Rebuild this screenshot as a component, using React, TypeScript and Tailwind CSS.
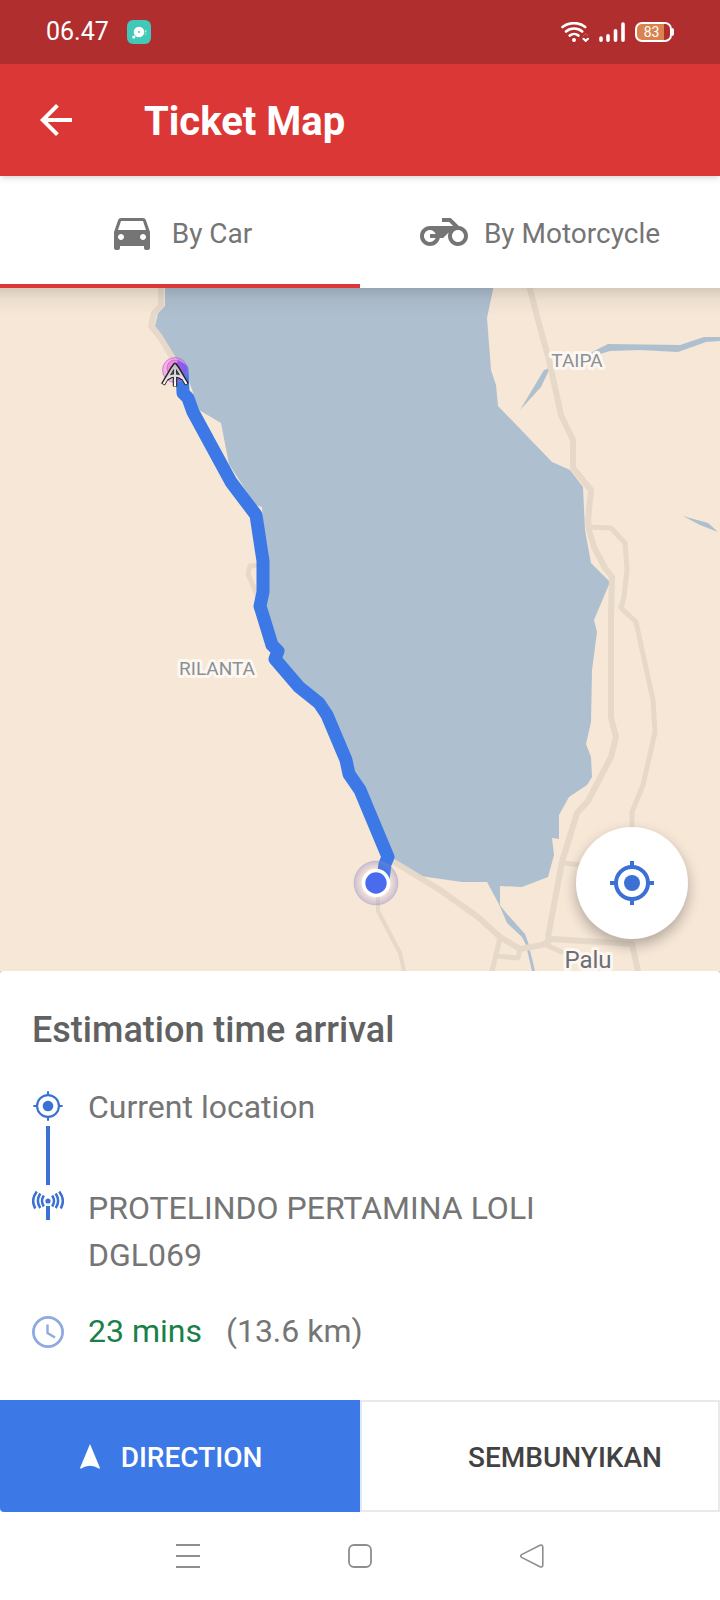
import React, { useState } from "react";

function TargetIcon({ className, line = 2 }: { className: string; line?: number }) {
  return (
    <svg viewBox="0 0 24 24" className={className} fill="none" stroke="currentColor" strokeWidth={line} aria-hidden="true">
      <circle cx="12" cy="12" r={9 - line / 2} />
      <circle cx="12" cy="12" r="4" fill="currentColor" stroke="none" />
      <path d="M12 1v3M12 20v3M1 12h3M20 12h3" />
    </svg>
  );
}

function StatusBar() {
  return (
    <div className="flex h-16 items-center justify-between bg-[#b12e2f] px-[46px] text-white">
      <div className="flex items-center gap-[18px]">
        <span className="text-[25px]">06.47</span>
        <svg viewBox="0 0 24 24" className="size-6" aria-hidden="true">
          <rect width="24" height="24" rx="6" fill="#41c8b8" />
          <circle cx="12" cy="12" r="5.3" fill="#fff" />
          <circle cx="6.8" cy="17" r="1.6" fill="#fff" />
          <circle cx="12" cy="12" r="1" fill="#41c8b8" />
          <path d="M18.7 10v2.2M18.7 13.6v1.2" stroke="#a9e6df" strokeWidth="1.4" />
        </svg>
      </div>
      <div className="flex items-center gap-[10px]">
        <svg viewBox="0 0 28 20" className="h-5 w-7" fill="none" stroke="#fff" strokeWidth="2.600" strokeLinecap="round" aria-hidden="true">
          <path d="M1.500 5C8-.2 18-.2 24.200 5M5 9.500c4.500-4 11.700-4 16.200 0M8.800 13.600c2.500-2.200 6.100-2.200 8.600 0" />
          <circle cx="13" cy="18" r="2" fill="#fff" stroke="none" />
          <path d="M22.500 16.800l2.200 2 2.200-2" strokeWidth="2.200" />
          <path d="M22.500 13.500l2.200-2 2.200 2" stroke="#c86464" strokeWidth="1" />
        </svg>
        <svg viewBox="0 0 26 20" className="h-5 w-[26px]" stroke="#fff" strokeWidth="3.600" strokeLinecap="round" aria-hidden="true">
          <path d="M2 16v2.200M9 13.800v4.400M16.500 8.800v9.400M24 2v16.200" />
        </svg>
        <div className="flex items-center">
          <div className="flex h-5 w-[37px] items-center justify-center rounded-[7px] border-2 border-white bg-linear-to-r from-[#d98350] from-82% to-[#b12e2f] to-82%">
            <span className="pr-1 text-sm leading-4">83</span>
          </div>
          <div className="h-2 w-[2px] rounded-r bg-white" />
        </div>
      </div>
    </div>
  );
}

function AreaMap() {
  return (
    <svg viewBox="0 288 720 683" className="block h-auto w-full bg-[#f6e7d7] font-[Roboto]" role="img" aria-label="Route map">
      <defs>
        <linearGradient id="topShade" x1="0" y1="0" x2="0" y2="1">
          <stop offset="0" stopColor="#000" stopOpacity="0.13" />
          <stop offset="0.4" stopColor="#000" stopOpacity="0.04" />
          <stop offset="1" stopColor="#000" stopOpacity="0" />
        </linearGradient>
        <radialGradient id="halo">
          <stop offset="0.6" stopColor="#8c7fc8" stopOpacity="0" />
          <stop offset="1" stopColor="#8c7fc8" stopOpacity="0.4" />
        </radialGradient>
        <linearGradient id="steel" gradientUnits="userSpaceOnUse" x1="0" y1="365" x2="0" y2="386">
          <stop offset="0" stopColor="#bdb8be" />
          <stop offset="1" stopColor="#fff" />
        </linearGradient>
      </defs>

      <g fill="#aebfcf">
        <path d="M165 285V306L158 313 155 326 160 333 174 355 186 372 199 410 221 423 229 464 255 505 262 507 263 520 268 560V593L264 606 274 640 284 652 280 660 300 682 322 699 330 712 342 741 354 780 362 792 394 861 420 876 462 882 487 882 500 906V886L522 887 548 877 554 855 552 838 559 839V815L569 797 587 785 592 777 591 757 586 744 591 722 592 670 597 632 594 620 610 582 591 563 585 530 583 487 570 470 552 462 498 406 496 385 491 370 487 318 494 285Z" />
        <path d="M499 904L507 914 525 934 528 942 535 971H532L526 945 522 937 507 923Z" />
        <path d="M520 410L544 370 550 368 541 387Z" />
        <path d="M556 366L590 353 608 344 680 345 704 337H720V341L706 342 678 352 640 350 610 351 590 357Z" />
        <path d="M683 516L708 523 718 532 700 525Z" />
      </g>

      <g fill="none" stroke="#e7d9c9" strokeWidth="6" strokeLinejoin="round" strokeLinecap="round">
        <path d="M161 285V306L154 313 151 326 160 337 172 357" />
        <path d="M258 565L250 566 248 574 258 597" strokeWidth="5" />
        <path d="M529 285L538 320 549 360 561 415 573 440V468L591 490 588 520 589 530 594 547 605 568 612 577 611 615V718L616 737 611 757 588 801 577 813 562 862 548 937" />
        <path d="M588 527L611 528 625 543 627 570 624 597 621 608 636 622 653 700 655 732 643 785 632 812V828" strokeWidth="5" />
        <path d="M563 863L582 865" strokeWidth="5" />
        <path d="M394 862L440 890 478 917 500 937 520 949 542 945 552 939 632 944 638 971" />
        <path d="M500 938L492 971M496 956L518 958 520 949M546 945L562 952" strokeWidth="5" />
        <path d="M378 892V911L400 953 404 971" strokeWidth="4" />
      </g>

      <path
        d="M175 366L182 370 183 393 188 398 193 412 231 482 256 515 263 561V592L260 606 272 645 278 651 275 659 299 687 319 703 327 715 346 760 349 774 360 790 388 857 385 864 383 880"
        fill="none"
        stroke="#3c79e6"
        strokeWidth="13"
        strokeLinejoin="round"
      />

      <g>
        <circle cx="175" cy="370" r="12.500" fill="#e33ff0" fillOpacity="0.3" stroke="#c35fe0" strokeOpacity="0.7" />
        <circle cx="175" cy="368" r="8" fill="#e33ff0" fillOpacity="0.35" stroke="#d33fe4" strokeOpacity="0.6" />
        <path d="M163 384.500L172.500 368 175 364.800 177.500 368 187 384.500M167 378.500Q175 372 183 378.500M175 366V386.500" fill="none" stroke="#222" strokeWidth="4.400" strokeLinejoin="round" />
        <path d="M163.500 384L172.700 368.500 175 365.500 177.300 368.500 186.500 384M167 378.500Q175 372 183 378.500M175 366V386" fill="none" stroke="url(#steel)" strokeWidth="2.200" />
      </g>

      <g>
        <circle cx="376" cy="883" r="22" fill="url(#halo)" stroke="#9a90c4" strokeOpacity="0.3" />
        <circle cx="376" cy="883" r="12.500" fill="#4b6bee" stroke="#fff" strokeWidth="3.600" />
      </g>

      <g fill="#8a9097" stroke="#fdf7f0" strokeWidth="6" strokeLinejoin="round" paintOrder="stroke" textAnchor="middle" fontSize="19">
        <text x="577" y="367">TAIPA</text>
        <text x="217" y="675">RILANTA</text>
        <text x="588" y="968" fill="#6c6e76" fontSize="24">Palu</text>
      </g>

      <rect y="288" width="720" height="28" fill="url(#topShade)" />
    </svg>
  );
}

export default function App() {
  const [mode, setMode] = useState("car");

  return (
    <div className="flex min-h-screen flex-col bg-white font-[Roboto,sans-serif] text-[#757575]">
      <StatusBar />

      <header className="z-10 flex h-28 items-center gap-16 bg-[#dc3737] px-8 text-white shadow-md">
        <button type="button" aria-label="Back">
          <svg viewBox="0 0 24 24" className="size-12" fill="currentColor" aria-hidden="true">
            <path d="M20 11H7.830l5.590-5.590L12 4l-8 8 8 8 1.410-1.410L7.830 13H20v-2z" />
          </svg>
        </button>
        <h1 className="pt-1 text-[40px] font-bold">Ticket Map</h1>
      </header>

      <nav className="grid h-28 grid-cols-2 text-[28px]" aria-label="Travel mode">
        <button
          type="button"
          aria-pressed={mode === "car"}
          onClick={() => setMode("car")}
          className={`flex items-center justify-center gap-4 border-y-4 border-t-transparent ${mode === "car" ? "border-b-[#dc3737]" : "border-b-transparent"}`}
        >
          <svg viewBox="0 0 24 24" className="size-12" fill="currentColor" aria-hidden="true">
            <path d="M18.920 6.010C18.720 5.420 18.160 5 17.500 5h-11c-.66 0-1.210.42-1.420 1.010L3 12v8c0 .55.45 1 1 1h1c.55 0 1-.45 1-1v-1h12v1c0 .55.45 1 1 1h1c.55 0 1-.45 1-1v-8l-2.080-5.990zM6.500 16c-.83 0-1.500-.67-1.500-1.500S5.670 13 6.500 13s1.500.67 1.500 1.500S7.330 16 6.500 16zm11 0c-.83 0-1.500-.67-1.500-1.500s.67-1.500 1.500-1.500 1.500.67 1.500 1.500-.67 1.500-1.500 1.500zM5 11l1.500-4.500h11L19 11H5z" />
          </svg>
          <span className="pt-1">By Car</span>
        </button>
        <button
          type="button"
          aria-pressed={mode === "motorcycle"}
          onClick={() => setMode("motorcycle")}
          className={`flex items-center justify-center gap-4 border-y-4 border-t-transparent ${mode === "motorcycle" ? "border-b-[#dc3737]" : "border-b-transparent"}`}
        >
          <svg viewBox="0 0 24 24" className="size-12" fill="currentColor" aria-hidden="true">
            <path d="M19.440 9.030L15.410 5H11v2h3.590l2 2H5c-2.800 0-5 2.200-5 5s2.200 5 5 5c2.460 0 4.450-1.690 4.900-4h1.650l2.770-2.770c-.21.54-.32 1.140-.32 1.770 0 2.800 2.200 5 5 5s5-2.200 5-5c0-2.650-1.970-4.770-4.560-4.970zM7.820 15C7.400 16.150 6.280 17 5 17c-1.630 0-3-1.370-3-3s1.370-3 3-3c1.280 0 2.400.85 2.820 2H5v2h2.820zM19 17c-1.660 0-3-1.340-3-3s1.340-3 3-3 3 1.340 3 3-1.340 3-3 3z" />
          </svg>
          <span className="pt-1">By Motorcycle</span>
        </button>
      </nav>

      <div className="relative">
        <AreaMap />
        <button
          type="button"
          aria-label="Center on my location"
          className="absolute right-8 bottom-8 flex size-28 items-center justify-center rounded-full bg-white text-[#3c71d4] shadow-[0_6px_14px_rgba(0,0,0,0.28)]"
        >
          <TargetIcon className="size-12" />
        </button>
      </div>

      <main className="bg-[#e9dccf]">
        <section className="rounded-t bg-white px-8 pt-[37px] pb-[45px] text-[32px] leading-[47px] shadow-[0_-1px_4px_rgba(0,0,0,0.12)]">
          <h2 className="mb-8 text-4xl leading-[44px] font-medium text-[#616161]">Estimation time arrival</h2>
          <ol>
            <li className="flex min-h-[101px] gap-6">
              <div className="flex w-8 flex-col items-center gap-1 pt-1.5 text-[#3c71d4]">
                <TargetIcon className="size-8" line={1.6} />
                <div className="w-1 flex-1 bg-current" />
              </div>
              <p>Current location</p>
            </li>
            <li className="flex gap-6">
              <div className="w-8 shrink-0 pt-1 text-[#3c71d4]">
                <svg viewBox="0 0 32 32" className="size-8" fill="none" stroke="currentColor" strokeWidth="2.500" aria-hidden="true">
                  <circle cx="16" cy="12" r="2.600" fill="currentColor" stroke="none" />
                  <path d="M16 17v14" strokeWidth="4" />
                  <path d="M11.800 6.500q-3.600 5.500 0 11M8.300 4.500q-4.800 7.500 0 14.500M4.800 2.500q-6.500 8.500 -1.500 17M20.200 6.500q3.600 5.500 0 11M23.700 4.500q4.800 7.500 0 14.500M27.200 2.500q6.500 8.500 1.500 17" />
                </svg>
              </div>
              <p>
                PROTELINDO PERTAMINA LOLI
                <br />
                DGL069
              </p>
            </li>
          </ol>
          <div className="mt-[29px] flex items-center gap-6">
            <svg viewBox="0 0 32 32" className="size-8" fill="none" stroke="#8daae2" strokeWidth="2.800" aria-hidden="true">
              <circle cx="16" cy="16" r="14.600" />
              <path d="M15.500 8.500V17l7.500 4.500" strokeWidth="2.400" />
            </svg>
            <span className="text-[#188048]">23 mins</span>
            <span>(13.6 km)</span>
          </div>
        </section>
      </main>

      <div className="grid h-28 grid-cols-2 text-[28px] font-medium">
        <button type="button" className="flex items-center justify-center gap-[21px] rounded-bl bg-[#3c79e6] pr-[18px] text-white">
          <svg viewBox="0 0 20 25" className="h-[25px] w-5" fill="currentColor" aria-hidden="true">
            <path d="M10 0L20 24 19.300 24.700Q10 19 .7 24.700L0 24Z" />
          </svg>
          <span className="pt-1">DIRECTION</span>
        </button>
        <button type="button" className="border-2 border-[#e9e9e9] border-l-[#dceafb] pt-1 pl-[50px] text-[#424242]">
          SEMBUNYIKAN
        </button>
      </div>

      <footer className="flex h-[88px] items-center justify-center gap-[148px] text-[#8e8e8e]">
        <button type="button" aria-label="Recent apps">
          <svg viewBox="0 0 24 24" className="size-6" stroke="currentColor" strokeWidth="2" aria-hidden="true">
            <path d="M0 1h24M0 12h24M0 23h24" />
          </svg>
        </button>
        <button type="button" aria-label="Home">
          <svg viewBox="0 0 24 24" className="size-6" fill="none" stroke="currentColor" strokeWidth="1.800" aria-hidden="true">
            <rect x="1" y="1" width="22" height="22" rx="5" />
          </svg>
        </button>
        <button type="button" aria-label="Back to previous screen">
          <svg viewBox="0 0 24 24" className="size-6" fill="none" stroke="currentColor" strokeWidth="1.600" strokeLinejoin="round" aria-hidden="true">
            <path d="M1.600 10.600L20 1.200Q22.600 0.400 22.800 3V21Q22.600 23.600 20 22.800L1.600 13.400Q-.2 12 1.600 10.600Z" />
          </svg>
        </button>
      </footer>
    </div>
  );
}
